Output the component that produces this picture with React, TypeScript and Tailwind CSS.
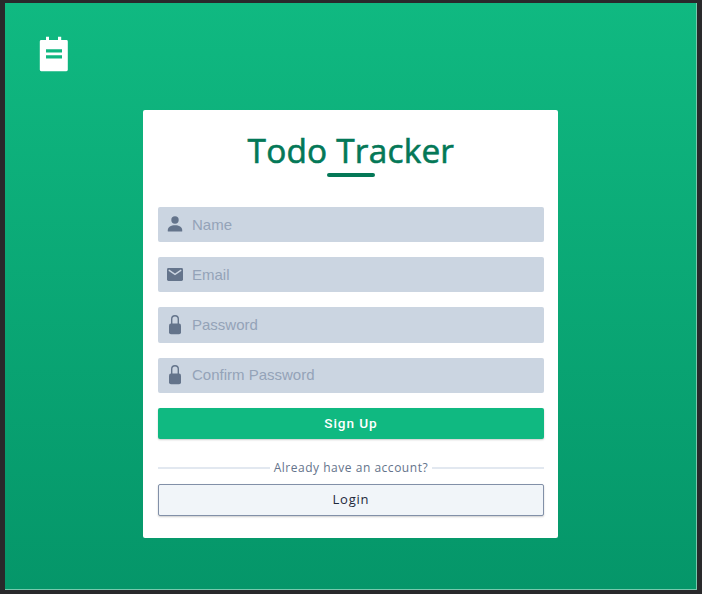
import type { ReactNode } from "react";

function Field({ icon, label, type = "text" }: { icon: ReactNode; label: string; type?: string }) {
  return (
    <label className="flex h-[35.3px] items-center rounded-[2px] bg-[#cbd5e1] pl-[9px] text-[#64748b]">
      {icon}
      <input
        type={type}
        placeholder={label}
        className="ml-[9px] min-w-0 flex-1 bg-transparent font-['Liberation_Sans',Arial,sans-serif] text-[15px] leading-5 outline-none placeholder:text-[#94a3b8]"
      />
    </label>
  );
}

function PersonIcon() {
  return (
    <svg className="mb-[2px] size-4 shrink-0" viewBox="0 0 16 16" fill="currentColor">
      <circle cx="8" cy="4" r="3.7" />
      <path d="M.8 15.4v-1.2C.8 10.9 4 9.2 8 9.2s7.2 1.7 7.2 5v1.2z" />
    </svg>
  );
}

function MailIcon() {
  return (
    <svg className="size-4 shrink-0" viewBox="0 0 16 16" fill="currentColor">
      <rect y="1" width="16" height="13" rx="1.4" />
      <path d="M1.8 3.2 8 7.4l6.2-4.2" fill="none" stroke="#cbd5e1" strokeWidth="1.4" />
    </svg>
  );
}

function LockIcon() {
  return (
    <svg className="mb-[1px] h-5 w-4 shrink-0" viewBox="0 0 16 20" fill="currentColor">
      <rect x="2" y="8.5" width="12" height="10.8" rx="2" />
      <path d="M4.7 9V4.1a3.3 3.3 0 0 1 6.6 0V9" fill="none" stroke="currentColor" strokeWidth="1.4" />
    </svg>
  );
}

export default function App() {
  return (
    <div className="h-[594px] w-[702px] bg-[#29292b] pt-[3px] pl-[5px]">
      <main className="flex h-[587px] w-[692px] flex-col border-r border-b border-[#76c9ad] bg-linear-to-b from-[#10b981] to-[#059669] bg-origin-border font-['Open_Sans','Noto_Sans',sans-serif]">
        <header className="h-[106.5px] pt-[33px] pl-[34px]">
          <svg width="30" height="36" viewBox="0 0 30 36" fill="white">
            <path d="M7 .8h3V4h9V.8h3.2V4H27.4a1.4 1.4 0 0 1 1.4 1.4v28.4a1.4 1.4 0 0 1-1.4 1.4H2.2A1.4 1.4 0 0 1 .8 33.8V5.4A1.4 1.4 0 0 1 2.2 4H7z" />
            <path d="M7 13.2h16v3.2H7zm0 6h16v3.2H7z" fill="#10b780" />
          </svg>
        </header>
        <section className="ml-[138px] h-[428.8px] w-[415.4px] rounded-[2px] bg-white pr-[14.6px] pl-[15px] pt-[17.5px]">
          <h1 className="h-[46px] text-center text-[33.4px] leading-[47px] font-normal tracking-[0.2px] whitespace-nowrap text-[#047857] [-webkit-text-stroke:0.6px_#047857]">
            Todo Tracker
          </h1>
          <div className="mx-auto h-[4px] w-12 rounded-full bg-[#047857]" />
          <form className="mt-[30px]">
            <div className="flex flex-col gap-[14.9px]">
              <Field icon={<PersonIcon />} label="Name" />
              <Field icon={<MailIcon />} label="Email" />
              <Field icon={<LockIcon />} label="Password" type="password" />
              <Field icon={<LockIcon />} label="Confirm Password" type="password" />
            </div>
            <button type="button" className="mt-[15px] block h-[31px] w-full rounded-[2px] bg-[#10b981] text-center font-[Roboto,sans-serif] text-[13.6px] font-medium tracking-[0.9px] text-white shadow-[0_1px_2px_#0003]">
              Sign Up
            </button>
            <div className="mt-[20px] flex h-[18px] items-center gap-[4px] whitespace-nowrap">
              <span className="h-[1.5px] flex-1 bg-[#e2e8f0]" />
              <span className="text-[12px] leading-[18px] tracking-[0.52px] text-[#64748b]">Already have an account?</span>
              <span className="h-[1.5px] flex-1 bg-[#e2e8f0]" />
            </div>
            <button type="button" className="mt-[7px] block h-[32px] w-full rounded-[2px] border border-[#8290a8] bg-[#f1f5f9] text-center text-[13px] tracking-[0.8px] text-[#1e293b] shadow-[0_1px_2px_#0003]">
              Login
            </button>
          </form>
        </section>
      </main>
    </div>
  );
}
